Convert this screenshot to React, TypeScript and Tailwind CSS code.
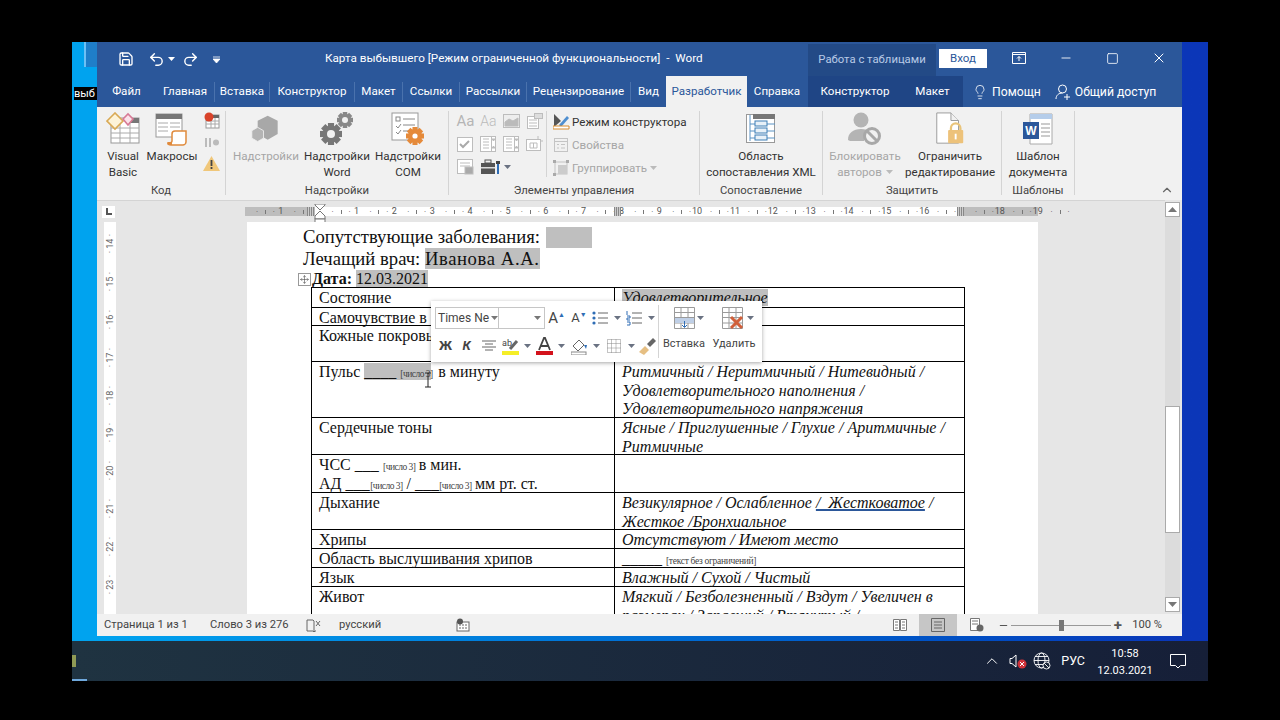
import { Save, Undo2, Redo2, Lightbulb, X, Minus, Square, ChevronUp, Move } from 'lucide-react'

const ui = "font-['Roboto',sans-serif]"

const tabs: [string, string][] = [
  ['Файл', 'w-[59px]'],
  ['Главная', 'w-[59px]'],
  ['Вставка', 'w-[55px]'],
  ['Конструктор', 'w-[85px]'],
  ['Макет', 'w-[48px]'],
  ['Ссылки', 'w-[57px]'],
  ['Рассылки', 'w-[67px]'],
  ['Рецензирование', 'w-[104px]'],
  ['Вид', 'w-[35px]'],
]

function Caret({ className = 'text-gray-500' }: { className?: string }) {
  return (
    <svg width="7" height="4" viewBox="0 0 7 4" className={className}>
      <path d="M0 0h7L3.5 4z" fill="currentColor" />
    </svg>
  )
}

function VbIcon() {
  return (
    <svg width="34" height="34" viewBox="0 0 34 34">
      <rect x="5" y="6" width="28" height="25" fill="#fff" stroke="#999" />
      <rect x="20" y="6" width="13" height="5" fill="#777" />
      <path d="M5 16h28M5 21h28M5 26h28M14 11v20M24 11v20" stroke="#aaa" />
      <path d="M1 9l8-8 8 8-8 8z" fill="#fdf3d8" stroke="#d9a954" strokeWidth="1.6" />
      <path d="M17 7l5-5 5 5-5 6z" fill="#fbe3ea" stroke="#d77a96" strokeWidth="1.6" />
    </svg>
  )
}

function MacroIcon() {
  return (
    <svg width="34" height="34" viewBox="0 0 34 34">
      <rect x="1" y="2" width="26" height="23" fill="#fff" stroke="#999" />
      <rect x="1" y="2" width="26" height="5" fill="#777" />
      <path d="M3 11h10M15 11h10M3 15h10M15 15h10M3 19h10" stroke="#aaa" />
      <path d="M20 19h11v11c0 2-2 3-3 3H16c-2 0-3-1-3-2 2 0 4 0 4-2v-7c0-2 1-3 3-3z" fill="#fff" stroke="#e08a3c" strokeWidth="1.5" />
      <path d="M13 33c-1-1-1-3 1-3h3v3z" fill="#e08a3c" />
    </svg>
  )
}

function RecordIcon() {
  return (
    <svg width="17" height="17" viewBox="0 0 17 17">
      <rect x="3" y="3" width="13" height="13" fill="#fff" stroke="#999" />
      <rect x="8" y="3" width="8" height="3" fill="#666" />
      <path d="M3 9h13M3 12h13M8 6v10M12 6v10" stroke="#aaa" />
      <circle cx="6" cy="5" r="4.5" fill="#d9432a" />
    </svg>
  )
}

function PauseIcon() {
  return (
    <svg width="17" height="11" viewBox="0 0 17 11">
      <path d="M2 1h2v9H2zM6 1h2v9H6z" fill="#bbb" />
      <circle cx="13" cy="5.5" r="3" fill="#bbb" />
    </svg>
  )
}

function WarnIcon() {
  return (
    <svg width="17" height="15" viewBox="0 0 17 15">
      <path d="M8.5 0L17 15H0z" fill="#f0c77a" />
      <path d="M7.6 4h1.8v6H7.6zM7.6 11h1.8v2H7.6z" fill="#444" />
    </svg>
  )
}

function HexIcon() {
  return (
    <svg width="30" height="30" viewBox="0 0 36 32">
      <path d="M20 0l12 6v16l-12 7-12-7V6z" fill="#a8a8a8" />
      <path d="M8 14l7 4v9l-7 4-7-4v-9z" fill="#b4b4b4" stroke="#f1f1f1" />
    </svg>
  )
}

function Gear({ x, y, r, fill }: { x: number; y: number; r: number; fill: string }) {
  return (
    <g fill={fill} transform={`translate(${x} ${y})`}>
      {[0, 45, 90, 135].map((a) => (
        <rect key={a} x={-r * 0.28} y={-r} width={r * 0.56} height={r * 2} transform={`rotate(${a})`} />
      ))}
      <circle r={r * 0.78} />
    </g>
  )
}

function GearsIcon() {
  return (
    <svg width="36" height="34" viewBox="0 0 36 34">
      <Gear x={12} y={22} r={11} fill="#777" />
      <circle cx="12" cy="22" r="4" fill="#f1f1f1" />
      <Gear x={26} y={8} r={8} fill="#888" />
      <circle cx="26" cy="8" r="3" fill="#f1f1f1" />
    </svg>
  )
}

function ComIcon() {
  return (
    <svg width="34" height="34" viewBox="0 0 34 34">
      <rect x="1" y="1" width="26" height="27" fill="#fff" stroke="#999" />
      <rect x="5" y="5" width="4" height="4" fill="#fff" stroke="#888" />
      <path d="M12 7h12M12 13h12M5 14l2 2 3-4M5 20l2 2 3-4M12 19h6" stroke="#888" fill="none" />
      <Gear x={24} y={24} r={9} fill="#e58a3a" />
      <circle cx="24" cy="24" r="2.6" fill="#fff" />
    </svg>
  )
}

function Tiny({ kind }: { kind: number }) {
  const c = '#bdbdbd'
  if (kind === 0) return <span className="text-[15px] leading-none text-[#b5b5b5]">Aa</span>
  if (kind === 1) return <span className="text-[14px] font-light leading-none text-[#bbb]">Aa</span>
  return (
    <svg width="17" height="16" viewBox="0 0 17 16" fill="none" stroke={c}>
      {kind === 2 && (
        <>
          <rect x=".5" y="1.5" width="16" height="13" fill="#eee" />
          <path d="M2 9l4-3 4 2 5-3v8H2z" fill="#bbb" />
        </>
      )}
      {kind === 3 && (
        <>
          <rect x="1.5" y="3.5" width="11" height="12" fill="#fff" />
          <rect x="8.5" y=".5" width="8" height="5" fill="#ddd" />
          <path d="M3 7h8M3 10h8M3 13h8" />
        </>
      )}
      {kind === 4 && (
        <>
          <rect x=".5" y="1.5" width="15" height="14" fill="#fff" />
          <path d="M3 8l3 3 6-6" strokeWidth="2" stroke="#aaa" />
        </>
      )}
      {(kind === 5 || kind === 6) && (
        <>
          <rect x=".5" y=".5" width="15" height="15" fill="#fff" />
          <path d="M3 3h6M3 6h6M3 9h6M3 12h6M11.5 1v14" />
          <path d="M12 3l1.5 2 1.5-2zM12 12l1.5-2 1.5 2z" fill={c} />
        </>
      )}
      {kind === 7 && (
        <>
          <rect x=".5" y="3.5" width="14" height="11" fill="#fff" />
          <path d="M4 7h7v5H4zM7.5 7v5M12 3V0M14 5h3" />
        </>
      )}
      {kind === 8 && (
        <>
          <rect x=".5" y=".5" width="15" height="14" fill="#fff" />
          <path d="M3 4h10M3 7h10" />
          <rect x="8" y="8" width="8" height="7" fill="#aaa" />
        </>
      )}
    </svg>
  )
}

function Toolbox() {
  return (
    <svg width="20" height="16" viewBox="0 0 20 16">
      <rect x="0" y="4" width="14" height="11" fill="#555" />
      <rect x="4" y="1" width="6" height="3" fill="none" stroke="#555" />
      <rect x="0" y="8" width="14" height="1.5" fill="#ddd" />
      <rect x="16" y="5" width="2" height="10" fill="#2f6db5" />
      <rect x="15" y="2" width="4" height="3" fill="#444" />
    </svg>
  )
}

function DesignModeIcon() {
  return (
    <svg width="17" height="17" viewBox="0 0 17 17">
      <path d="M1 1l7 7-7 6z" fill="#555" />
      <path d="M6 12L14 3l2 2-8 9z" fill="#4f8fd0" />
      <path d="M0 13h16v3H0z" fill="#fff" stroke="#d98c2f" />
    </svg>
  )
}

function PropsIcon() {
  return (
    <svg width="16" height="16" viewBox="0 0 16 16" fill="none" stroke="#c4c4c4">
      <rect x="1.5" y="1.5" width="13" height="13" />
      <path d="M1.5 4.5h13M4 7.5h2M8 7.5h4M4 11h2M8 11h4" />
    </svg>
  )
}

function GroupIcon() {
  return (
    <svg width="16" height="16" viewBox="0 0 16 16">
      <rect x="2" y="2" width="12" height="12" fill="none" stroke="#c4c4c4" />
      <rect x="5" y="5" width="9" height="9" fill="#ccc" />
      <path d="M0 0h3v3H0zM13 0h3v3h-3zM0 13h3v3H0z" fill="#aaa" />
    </svg>
  )
}

function XmlIcon() {
  return (
    <svg width="30" height="30" viewBox="0 0 30 30" fill="none">
      <rect x=".5" y=".5" width="28" height="28" fill="#fff" stroke="#999" />
      <rect x="7" y="0" width="22" height="5" fill="#777" />
      <path d="M4 1v26M4 10h5M4 17h5M4 24h5M21 10h8M21 17h8M21 24h8" stroke="#5b93c4" />
      <rect x="9" y="7" width="12" height="5" fill="#e8f1f8" stroke="#3f7fb5" />
      <rect x="9" y="14" width="12" height="5" fill="#e8f1f8" stroke="#3f7fb5" />
      <rect x="9" y="21" width="12" height="5" fill="#e8f1f8" stroke="#3f7fb5" />
    </svg>
  )
}

function BlockIcon() {
  return (
    <svg width="34" height="34" viewBox="0 0 34 34">
      <circle cx="13" cy="8" r="7.5" fill="#b4b4b4" />
      <path d="M0 28c0-7 5-11 13-11 4 0 7 1 9 3-4 2-6 5-6 9H2z" fill="#b4b4b4" />
      <circle cx="24" cy="24" r="7.5" fill="#f1f1f1" stroke="#a8a8a8" strokeWidth="3" />
      <path d="M19 19l10 10" stroke="#a8a8a8" strokeWidth="3" />
    </svg>
  )
}

function LockDocIcon() {
  return (
    <svg width="30" height="34" viewBox="0 0 30 36">
      <path d="M1 1h15l8 8v24H1z" fill="#fff" stroke="#999" />
      <path d="M16 1v8h8" fill="#f1f1f1" stroke="#999" />
      <path d="M16 19v-2a5 5 0 0 1 10 0v2" fill="none" stroke="#e9c47a" strokeWidth="2.4" />
      <rect x="13" y="19" width="16" height="14" rx="1" fill="#edc27a" />
      <rect x="20" y="23" width="2" height="6" fill="#fff" />
    </svg>
  )
}

function WordDocIcon() {
  return (
    <svg width="32" height="32" viewBox="0 0 32 32">
      <path d="M8 1h22v30H8z" fill="#fff" stroke="#aaa" />
      <rect x="8" y="1" width="22" height="5" fill="#b5cdea" />
      <path d="M19 11h9M19 15h9M19 19h9M19 23h9" stroke="#999" />
      <rect x="1" y="9" width="16" height="17" fill="#2b579a" />
      <text x="9" y="22" fontSize="12" fontWeight="700" fill="#fff" textAnchor="middle" fontFamily="Liberation Sans">W</text>
    </svg>
  )
}

function BigButton({ icon, lines, disabled, caret }: { icon: React.ReactNode; lines: string[]; disabled?: boolean; caret?: boolean }) {
  return (
    <div className={`flex flex-col items-center ${disabled ? 'text-[#a6a6a6]' : 'text-[#333]'}`}>
      <div className="flex h-[36px] shrink-0 items-center justify-center">{icon}</div>
      <div className="mt-[1px] text-center text-[11.6px] leading-[16px] whitespace-nowrap">
        {lines.map((l, i) => (
          <div key={l} className="flex items-center justify-center gap-[4px]">
            {l}
            {caret && i === lines.length - 1 && <Caret className="text-[#bbb]" />}
          </div>
        ))}
      </div>
    </div>
  )
}

function Group({ w, label, children }: { w: string; label: string; children: React.ReactNode }) {
  return (
    <div className={`${w} mb-[5px] mt-[4px] flex flex-col border-r border-[#d4d4d4]`}>
      <div className="flex h-[72px] shrink-0">{children}</div>
      <div className="text-center text-[11.3px] leading-[16px] text-[#444]">{label}</div>
    </div>
  )
}

function Ribbon() {
  return (
    <div className="flex h-[93px] bg-[#f1f1f1]">
      <Group w="w-[129px]" label="Код">
        <div className="ml-[1px] flex w-[50px] justify-center">
          <BigButton icon={<VbIcon />} lines={['Visual', 'Basic']} />
        </div>
        <div className="flex w-[48px] justify-center">
          <BigButton icon={<MacroIcon />} lines={['Макросы']} />
        </div>
        <div className="ml-[7px] flex w-[17px] flex-col items-center gap-[8px] pt-[1px]">
          <RecordIcon />
          <PauseIcon />
          <WarnIcon />
        </div>
      </Group>
      <Group w="w-[223px]" label="Надстройки">
        <div className="flex w-[80px] justify-center">
          <BigButton icon={<HexIcon />} lines={['Надстройки']} disabled />
        </div>
        <div className="flex w-[62px] justify-center">
          <BigButton icon={<GearsIcon />} lines={['Надстройки', 'Word']} />
        </div>
        <div className="flex w-[80px] justify-center">
          <BigButton icon={<ComIcon />} lines={['Надстройки', 'COM']} />
        </div>
      </Group>
      <Group w="w-[251px]" label="Элементы управления">
        <div className="grid w-[97px] grid-cols-4 content-start gap-y-[7px] pl-[5px] pt-[2px]">
          {[0, 1, 2, 3, 4, 5, 6, 7].map((k) => (
            <div key={k} className="flex h-[16px] w-[23px] items-center justify-center">
              <Tiny kind={k} />
            </div>
          ))}
          <div className="flex h-[16px] w-[23px] items-center justify-center">
            <Tiny kind={8} />
          </div>
          <div className="col-span-2 flex h-[16px] items-center gap-[3px] pl-[4px]">
            <Toolbox />
            <Caret />
          </div>
        </div>
        <div className="flex h-[66px] flex-col gap-[7px] border-l border-[#d4d4d4] pl-[6px] pt-[2px] text-[11.6px] leading-[16px]">
          <div className="flex items-center gap-[2px] text-[#333]">
            <DesignModeIcon />
            Режим конструктора
          </div>
          <div className="flex items-center gap-[3px] text-[#a6a6a6]">
            <PropsIcon />
            Свойства
          </div>
          <div className="flex items-center gap-[3px] text-[#a6a6a6]">
            <GroupIcon />
            Группировать
            <Caret className="text-[#bbb]" />
          </div>
        </div>
      </Group>
      <Group w="w-[123px]" label="Сопоставление">
        <div className="flex w-full justify-center">
          <BigButton icon={<XmlIcon />} lines={['Область', 'сопоставления XML']} />
        </div>
      </Group>
      <Group w="w-[179px]" label="Защитить">
        <div className="flex w-[84px] justify-center">
          <BigButton icon={<BlockIcon />} lines={['Блокировать', 'авторов']} disabled caret />
        </div>
        <div className="flex w-[86px] justify-center">
          <BigButton icon={<LockDocIcon />} lines={['Ограничить', 'редактирование']} />
        </div>
      </Group>
      <Group w="w-[73px]" label="Шаблоны">
        <div className="flex w-full justify-center">
          <BigButton icon={<WordDocIcon />} lines={['Шаблон', 'документа']} />
        </div>
      </Group>
      <div className="flex flex-1 items-end justify-end pb-[3px] pr-[8px]">
        <ChevronUp size={14} className="text-[#666]" />
      </div>
    </div>
  )
}

function RulerCell({ n }: { n: string }) {
  return (
    <div className="flex w-[37.85px] shrink-0 items-center justify-between">
      <span className="-ml-[8px] w-[12px] text-center">{n}</span>
      <span className="text-[8px]">·</span>
      <span className="h-[4px] w-px bg-[#777]" />
      <span className="pr-[8px] text-[8px]">·</span>
    </div>
  )
}

function HRuler() {
  const nums = ['', '1', '', '1', '2', '3', '4', '5', '6', '7', '8', '9', '10', '11', '12', '13', '14', '15', '16', '', '18', '19']
  const hatch = 'absolute inset-y-0 w-[7px] bg-[repeating-linear-gradient(90deg,#888_0,#888_1px,#ccc_1px,#ccc_2px)]'
  return (
    <div className="relative ml-[130px] h-[9px] w-[793px] bg-white">
      <div className="absolute inset-y-0 left-0 w-[70px] bg-[#bdbdbd]" />
      <div className="absolute inset-y-0 right-0 w-[81px] bg-[#bdbdbd]" />
      <div className="absolute inset-y-0 left-0 flex text-[9px] leading-[9px] text-[#555]">
        {nums.map((n, i) => (
          <RulerCell key={i} n={n} />
        ))}
      </div>
      <div className="absolute -top-[3px] left-[69px] h-[15px] w-[10px]">
        <svg width="12" height="22" viewBox="0 0 12 22" fill="#fff" stroke="#777">
          <path d="M1 0h10v1L6 6 1 1zM6 7l5 5v3H1v-3z" />
          <rect x="1" y="15" width="10" height="6" />
        </svg>
      </div>
      <div className={`${hatch} left-[62px]`} />
      <div className={`${hatch} left-[369px]`} />
      <div className={`${hatch} left-[712px]`} />
    </div>
  )
}

function VRuler() {
  const nums = ['14', '15', '16', '17', '18', '19', '20', '21', '22', '23']
  return (
    <div className="ml-[7px] flex h-full w-[12px] shrink-0 flex-col items-center overflow-hidden bg-white text-[9px] leading-[12px] text-[#666]">
      {nums.map((n) => (
        <div key={n} className="flex h-[37.85px] shrink-0 flex-col items-center justify-center first:mt-[3px]">
          <span className="rotate-180 [writing-mode:vertical-rl]">· {n} ·</span>
        </div>
      ))}
    </div>
  )
}

function Tag({ t, w }: { t: string; w: string }) {
  return <span className={`inline-block ${w} text-center text-[9.5px] leading-none tracking-[-0.5px] text-[#444]`}>[{t}]</span>
}

function Row({ h, left, right }: { h: string; left: React.ReactNode; right?: React.ReactNode }) {
  return (
    <div className={`${h} flex border-b border-black`}>
      <div className="w-[303px] shrink-0 border-r border-black pl-[7px] pt-[1px] whitespace-nowrap">{left}</div>
      <div className="flex-1 pl-[7px] pr-[7px] pt-[1px] italic">{right}</div>
    </div>
  )
}

function Table() {
  return (
    <div className="w-[654px] border border-black text-[16px] leading-[18.6px] text-[#111]">
      <Row h="h-[20px]" left="Состояние" right={<span className="bg-[#bfbfbf]">Удовлетворительное</span>} />
      <Row h="h-[18px]" left="Самочувствие в" />
      <Row h="h-[36px]" left="Кожные покровы" />
      <Row
        h="h-[56px]"
        left={
          <>
            Пульс <span className="bg-[#bfbfbf]">____<Tag t="число 3" w="ml-[4px] w-[31px]" /></span><span className="ml-[7px]">в минуту</span>
          </>
        }
        right="Ритмичный / Неритмичный / Нитевидный / Удовлетворительного наполнения / Удовлетворительного напряжения"
      />
      <Row h="h-[37px]" left="Сердечные тоны" right="Ясные / Приглушенные / Глухие / Аритмичные / Ритмичные" />
      <Row
        h="h-[38px]"
        left={
          <>
            <div>ЧСС ___<Tag t="число 3" w="ml-[4px] w-[33px]" /><span className="ml-[3px]">в мин.</span></div>
            <div>
              АД _<span className="underline decoration-[#2b579a]">__</span><Tag t="число 3" w="w-[34px]" /><span className="ml-[3px]">/ ___</span><Tag t="число 3" w="w-[33px]" /><span className="ml-[3px]">мм рт. ст.</span>
            </div>
          </>
        }
      />
      <Row
        h="h-[37px]"
        left="Дыхание"
        right={
          <>
            Везикулярное / Ослабленное <span className="underline decoration-[#2b579a] decoration-2">/ &nbsp;Жестковатое</span> / Жесткое /Бронхиальное
          </>
        }
      />
      <Row h="h-[19px]" left="Хрипы" right="Отсутствуют / Имеют место" />
      <Row
        h="h-[19px]"
        left="Область выслушивания хрипов"
        right={
          <>
            <span className="not-italic">_____ </span>
            <span className="text-[9.5px] not-italic tracking-[-0.3px] text-[#444]">[текст без ограничений]</span>
          </>
        }
      />
      <Row h="h-[19px]" left="Язык" right="Влажный / Сухой / Чистый" />
      <Row h="h-[56px]" left="Живот" right="Мягкий / Безболезненный / Вздут / Увеличен в размерах / Запавший / Втянутый /" />
    </div>
  )
}

function MiniToolbar() {
  const cell = 'flex h-full shrink-0 items-center justify-center'
  return (
    <div className={`${ui} absolute left-[184px] top-[79px] flex h-[61px] w-[331px] bg-white text-[#444] shadow-[0_1px_4px_rgba(0,0,0,0.35)]`}>
      <div className="flex w-[227px] shrink-0 flex-col pl-[4px] pt-[6px]">
        <div className="flex h-[22px] items-center">
          <div className="flex h-[22px] w-[65px] items-center overflow-hidden whitespace-nowrap border border-[#c6c6c6] pl-[2px] text-[12px]">
            Times Ne
            <Caret className="ml-[2px] shrink-0 text-[#777]" />
          </div>
          <div className="flex h-[22px] w-[46px] items-center justify-end border border-l-0 border-[#c6c6c6] pr-[3px]">
            <Caret className="text-[#777]" />
          </div>
          <div className={`${cell} w-[23px] text-[15px]`}>A<sup className="text-[7px] text-[#2f6db5]">▲</sup></div>
          <div className={`${cell} w-[22px] text-[13px]`}>A<sup className="text-[7px] text-[#2f6db5]">▼</sup></div>
          <div className={`${cell} w-[20px]`}>
            <svg width="16" height="16" viewBox="0 0 16 16" stroke="#666"><path d="M6 3h10M6 8h10M6 13h10" /><g fill="#2f6db5" stroke="none"><circle cx="2" cy="3" r="1.6" /><circle cx="2" cy="8" r="1.6" /><circle cx="2" cy="13" r="1.6" /></g></svg>
          </div>
          <div className={`${cell} w-[14px]`}><Caret /></div>
          <div className={`${cell} w-[20px]`}>
            <svg width="16" height="16" viewBox="0 0 16 16" stroke="#666"><path d="M6 3h10M6 8h10M6 13h10" /><path d="M1 1v4M1 6h3v2H1v2h3M1 12h3v3H1" stroke="#2f6db5" fill="none" /></svg>
          </div>
          <div className={`${cell} w-[14px]`}><Caret /></div>
        </div>
        <div className="mt-[6px] flex h-[22px] items-center">
          <div className={`${cell} w-[21px] text-[13px] font-bold`}>Ж</div>
          <div className={`${cell} w-[21px] text-[13px] font-bold italic`}>К</div>
          <div className={`${cell} w-[23px]`}>
            <svg width="14" height="12" viewBox="0 0 14 12" stroke="#666"><path d="M0 1h14M3 4h8M0 7h14M3 10h8" /></svg>
          </div>
          <div className={`${cell} w-[20px]`}>
            <svg width="17" height="18" viewBox="0 0 17 18">
              <text x="0" y="9" fontSize="9" fill="#444" fontFamily="Roboto">ab</text>
              <path d="M8 12l7-8" stroke="#666" strokeWidth="3" />
              <rect y="14" width="17" height="4" fill="#f5ee28" />
            </svg>
          </div>
          <div className={`${cell} w-[14px]`}><Caret /></div>
          <div className={`${cell} w-[21px]`}>
            <svg width="17" height="18" viewBox="0 0 17 18"><path d="M3 13L8 1h1l5 12M5 9h7" fill="none" stroke="#444" strokeWidth="1.8" /><rect y="14" width="17" height="4" fill="#d3121c" /></svg>
          </div>
          <div className={`${cell} w-[13px]`}><Caret /></div>
          <div className={`${cell} w-[22px]`}>
            <svg width="17" height="17" viewBox="0 0 17 17"><path d="M2 8l6-6 5 5-6 6z" fill="#fff" stroke="#666" /><path d="M13 7l2 4 1-4z" fill="#2f6db5" /><rect x="0" y="14" width="15" height="3" fill="#fff" stroke="#888" /></svg>
          </div>
          <div className={`${cell} w-[12px]`}><Caret /></div>
          <div className={`${cell} w-[24px]`}>
            <svg width="14" height="14" viewBox="0 0 14 14" fill="none" stroke="#888" strokeDasharray="1 1"><path d="M.5.5h13v13H.5zM.5 4.5h13M.5 9h13M4.5.5v13M9 .5v13" /></svg>
          </div>
          <div className={`${cell} w-[11px]`}><Caret /></div>
          <div className={`${cell} w-[20px]`}>
            <svg width="17" height="17" viewBox="0 0 17 17"><path d="M0 14l6-6 4 4-5 5z" fill="#e6bf83" /><path d="M8 6l6-6 3 3-6 6z" fill="#666" /></svg>
          </div>
        </div>
      </div>
      <div className="my-[4px] border-l border-[#d4d4d4]" />
      <div className="flex flex-1 text-[11px] leading-[16px]">
        <div className="flex w-[50px] flex-col items-center pt-[5px]">
          <div className="ml-[9px] flex h-[24px] items-center gap-[2px]">
            <svg width="21" height="22" viewBox="0 0 21 22" fill="#fff" stroke="#9a9a9a"><path d="M.5.5h20v21H.5zM.5 5.5h20M.5 10.5h20M.5 16h20M7 .5v21M14 .5v21" /><rect x="1" y="11" width="19" height="5" fill="#bfcfe6" stroke="none" /><path d="M10.5 14v6M8 18l2.5 2.5L13 18" stroke="#2f6db5" fill="none" /></svg>
            <Caret />
          </div>
          <div className="mt-[6px]">Вставка</div>
        </div>
        <div className="flex w-[50px] flex-col items-center pt-[5px]">
          <div className="ml-[8px] flex h-[24px] items-center gap-[2px]">
            <svg width="23" height="23" viewBox="0 0 23 23" fill="#fff" stroke="#9a9a9a"><path d="M.5.5h20v21H.5zM.5 5.5h20M.5 10.5h20M.5 16h20M7 .5v21M14 .5v21" /><path d="M9 10l11 11M20 10L9 21" stroke="#d0603a" strokeWidth="3" /></svg>
            <Caret />
          </div>
          <div className="mt-[6px]">Удалить</div>
        </div>
      </div>
    </div>
  )
}

function Page() {
  return (
    <div className="relative h-full w-[791px] shrink-0 overflow-hidden bg-white pl-[56px] pt-[4px] font-['Liberation_Serif',serif] text-[#111]">
      <div className="flex h-[22px] items-center text-[18.67px] leading-[22px]">
        Сопутствующие заболевания:&nbsp;
        <span className="ml-[1px] inline-block h-[21px] w-[46px] bg-[#bfbfbf]" />
      </div>
      <div className="h-[22px] text-[18.67px] leading-[22px]">
        Лечащий врач: <span className="bg-[#bfbfbf] tracking-[0.6px]">Иванова А.А.</span>
      </div>
      <div className="ml-[9px] h-[17px] text-[16px] leading-[18px]">
        <b>Дата:</b> <span className="bg-[#bfbfbf]">12.03.2021</span>
      </div>
      <div className="ml-[8px]">
        <Table />
      </div>
      <div className="absolute left-[51px] top-[51px] flex h-[13px] w-[13px] items-center justify-center border border-[#999] bg-white text-[#444]">
        <Move size={9} strokeWidth={1.5} />
      </div>
      <MiniToolbar />
      <svg width="10" height="16" viewBox="0 0 10 16" className="absolute left-[176px] top-[150px]" stroke="#222" fill="none">
        <path d="M2 1h6M5 1v14M2 15h6" />
      </svg>
    </div>
  )
}

function StatusBar() {
  return (
    <div className="flex h-[22px] items-center bg-[#f1f1f1] text-[11.2px] text-[#444]">
      <span className="ml-[7px] w-[106px] whitespace-nowrap">Страница 1 из 1</span>
      <span className="w-[96px] whitespace-nowrap">Слово 3 из 276</span>
      <svg width="15" height="15" viewBox="0 0 15 15" fill="none" stroke="#666"><path d="M7 2H1v11h6l1 1V3zM8 14l1-1h1" /><path d="M10 3l4 5M14 3l-4 5" /></svg>
      <span className="ml-[18px] w-[117px]">русский</span>
      <svg width="14" height="14" viewBox="0 0 14 14"><rect x="1" y="4" width="12" height="9" fill="#fff" stroke="#666" /><circle cx="4" cy="3.5" r="3" fill="#555" /><path d="M3 7h8M3 10h8" stroke="#666" strokeDasharray="2 1" /></svg>
      <div className="ml-auto flex h-full items-center">
        <svg width="14" height="14" viewBox="0 0 14 14" fill="#fff" stroke="#777"><path d="M.5 1.5h6v11h-6zM7.5 1.5h6v11h-6zM2 4h3M2 7h3M2 10h3M9 4h3M9 7h3M9 10h3" /></svg>
        <div className="ml-[12px] flex h-full w-[38px] items-center justify-center bg-[#c6c6c6]">
          <svg width="14" height="14" viewBox="0 0 14 14" fill="none" stroke="#666"><path d="M.5.5h13v13H.5zM3 4h8M3 7h8M3 10h8" /></svg>
        </div>
        <div className="flex w-[40px] items-center justify-center">
          <svg width="14" height="14" viewBox="0 0 14 14" fill="#fff" stroke="#777"><path d="M.5.5h9v12h-9zM2 3h6M2 6h6" /><circle cx="10" cy="10" r="3.5" fill="#666" stroke="none" /></svg>
        </div>
        <Minus size={11} strokeWidth={2.5} className="ml-[1px] text-[#555]" />
        <div className="relative ml-[2px] h-px w-[100px] bg-[#999]">
          <div className="absolute -top-[5px] left-[48px] h-[11px] w-[5px] bg-[#777]" />
        </div>
        <span className="ml-[3px] text-[15px] font-bold leading-none text-[#555]">+</span>
        <span className="ml-[10px] mr-[20px] w-[30px] whitespace-nowrap text-right">100 %</span>
      </div>
    </div>
  )
}

function Scrollbar() {
  return (
    <div className="mb-[2px] flex w-[15px] flex-1 flex-col bg-[#dcdcdc]">
      <div className="flex h-[15px] shrink-0 items-center justify-center border border-[#aaa] bg-white">
        <svg width="9" height="5" viewBox="0 0 9 5"><path d="M4.5 0L9 5H0z" fill="#777" /></svg>
      </div>
      <div className="mt-[189px] h-[127px] shrink-0 border border-[#aaa] bg-white" />
      <div className="mt-auto flex h-[15px] shrink-0 items-center justify-center border border-[#aaa] bg-white">
        <svg width="9" height="5" viewBox="0 0 9 5"><path d="M4.5 5L9 0H0z" fill="#777" /></svg>
      </div>
    </div>
  )
}

function WordWindow() {
  return (
    <div className={`${ui} mb-[5px] flex w-[1085px] flex-col`}>
      <div className="flex h-[34px] bg-[#2b579a] text-white">
        <div className="flex w-[228px] items-center text-white">
          <Save size={16} strokeWidth={2} className="ml-[21px]" />
          <Undo2 size={17} strokeWidth={2} className="ml-[14px]" />
          <Caret className="ml-[3px] text-white" />
          <Redo2 size={17} strokeWidth={2} className="ml-[7px]" />
          <svg width="7" height="7" viewBox="0 0 7 7" className="ml-[14px]"><path d="M0 1h7M0 3h7L3.5 7z" stroke="#fff" strokeWidth=".8" fill="#fff" /></svg>
        </div>
        <div className="flex w-[483px] items-center whitespace-nowrap text-[11.7px]">Карта выбывшего [Режим ограниченной функциональности] &nbsp;-&nbsp; Word</div>
        <div className="mt-[2px] flex w-[128px] items-center justify-center bg-[#234a86] text-[11.3px] text-[#b9cbe6]">Работа с таблицами</div>
        <div className="ml-[3px] mt-[7px] flex h-[19px] w-[48px] items-center justify-center bg-white text-[11.5px] text-[#2b579a]">Вход</div>
        <svg width="14" height="12" viewBox="0 0 14 12" fill="none" stroke="#fff" className="ml-[25px] mt-[10px]"><path d="M.5.5h13v11H.5zM.5 2.5h13M7 9V4.5M5 6.5l2-2 2 2" /></svg>
        <Minus size={14} strokeWidth={1.5} className="ml-[33px] mt-[9px]" />
        <Square size={13} strokeWidth={1.5} className="ml-[33px] mt-[10px]" />
        <X size={16} strokeWidth={1.5} className="ml-[32px] mt-[8px]" />
      </div>
      <div className="flex h-[31px] items-center bg-[#2b579a] text-[11.6px] text-white">
        {tabs.map(([t, w], i) => (
          <div key={i} className={`${w} flex h-full items-center justify-center pt-[1px]`}>
            <span className={i > 0 && i < 8 ? 'flex h-[20px] w-full items-center justify-center border-r border-[#4a72ad]' : ''}>{t}</span>
          </div>
        ))}
        <div className="flex h-full w-[81px] items-center justify-center bg-[#f1f1f1] pt-[1px] text-[#2b579a]">Разработчик</div>
        <div className="flex h-full w-[60px] items-center justify-center pt-[1px]">Справка</div>
        <div className="ml-[1px] flex h-full w-[155px] bg-[#1f4585] pt-[1px]">
          <div className="flex w-[94px] items-center justify-center">Конструктор</div>
          <div className="flex w-[61px] items-center justify-center">Макет</div>
        </div>
        <Lightbulb size={16} strokeWidth={1.2} className="ml-[9px]" />
        <span className="ml-[4px] pt-[1px] text-[12.2px]">Помощн</span>
        <svg width="16" height="16" viewBox="0 0 16 16" fill="none" stroke="#fff" className="ml-[14px]">
          <circle cx="7.5" cy="5" r="4" />
          <path d="M1 15c0-3.5 2.5-6 6.500-6M9 13h6M12 10v6" />
        </svg>
        <span className="ml-[4px] pt-[1px] text-[12.2px]">Общий доступ</span>
      </div>
      <Ribbon />
      <div className="flex min-h-0 flex-1 bg-[#e6e6e6]">
        <div className="flex min-w-0 flex-1 flex-col">
          <div className="flex h-[22px] shrink-0 items-center border-t border-[#d4d4d4]">
            <div className="ml-[5px] flex h-[12px] w-[13px] shrink-0 items-center justify-center bg-white">
              <svg width="7" height="7" viewBox="0 0 7 7"><path d="M1 0h2v5h4v2H1z" fill="#555" /></svg>
            </div>
            <HRuler />
          </div>
          <div className="flex h-[392px] shrink-0">
            <VRuler />
            <div className="ml-[131px]">
              <Page />
            </div>
          </div>
        </div>
        <div className="flex w-[17px] shrink-0 flex-col pt-[2px]">
          <Scrollbar />
        </div>
      </div>
      <StatusBar />
    </div>
  )
}

function Taskbar() {
  return (
    <div className={`${ui} relative flex h-[40px] items-center bg-gradient-to-r from-[#1f3341] to-[#161f38] text-white`}>
      <div className="absolute bottom-0 left-0 h-[2px] w-[15px] bg-[#6fa8dc]" />
      <div className="h-[12px] w-[4px] bg-[#8f9a55]" />
      <div className="ml-auto flex items-center">
        <ChevronUp size={18} strokeWidth={1.3} />
        <svg width="18" height="16" viewBox="0 0 18 16" fill="none" stroke="#fff" className="ml-[8px]">
          <path d="M1 5.5h2L7 2v12L3 10.500H1z" />
          <circle cx="13" cy="11" r="4.5" fill="#d0323a" stroke="none" />
          <path d="M11 9l4 4M15 9l-4 4" />
        </svg>
        <svg width="18" height="18" viewBox="0 0 18 18" fill="none" stroke="#fff" strokeWidth=".9" className="ml-[6px]">
          <circle cx="8.5" cy="8.5" r="7.5" />
          <ellipse cx="8.5" cy="8.5" rx="3.5" ry="7.5" />
          <path d="M1 8.5h15M2 4.5h13M2 12.5h13" />
          <circle cx="13.5" cy="13.5" r="3.5" fill="#1a2538" />
          <path d="M11 11l5 5" />
        </svg>
        <span className="ml-[10px] text-[12.5px]">РУС</span>
        <div className="ml-[10px] w-[60px] pt-[1px] text-center text-[11px] leading-[17px]">
          <div>10:58</div>
          <div>12.03.2021</div>
        </div>
        <svg width="16" height="15" viewBox="0 0 16 15" fill="none" stroke="#fff" className="ml-[15px] mr-[22px]">
          <path d="M.5.5h15v11h-5l-2.5 2.5L5.500 11.500h-5z" />
        </svg>
      </div>
    </div>
  )
}

export default function App() {
  return (
    <div className="flex h-[720px] w-[1280px] flex-col overflow-hidden bg-black px-[72px] pt-[42px]">
      <div className="flex h-[599px] bg-gradient-to-r from-[#00a3ef] from-[2%] to-[#0b36b8] to-[98%]">
        <div className={`${ui} flex w-[25px] shrink-0 flex-col overflow-hidden`}>
          <div className="ml-[12px] h-[25px] w-[13px] border-l-2 border-[#6cc0f5] bg-[#1f7ec9]" />
          <div className="ml-[2px] mt-[20px] bg-black text-[11px] leading-[13px] text-white whitespace-nowrap">выб</div>
        </div>
        <WordWindow />
        <div className="w-[26px] shrink-0" />
      </div>
      <Taskbar />
    </div>
  )
}
